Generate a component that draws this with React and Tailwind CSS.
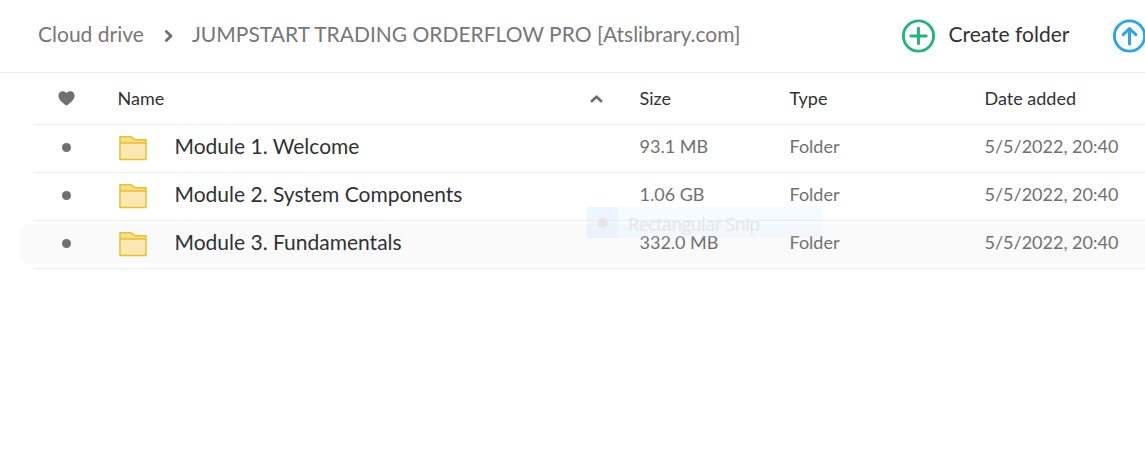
const folders = [
  { name: "Module 1. Welcome", size: "93.1 MB", added: "5/5/2022, 20:40" },
  { name: "Module 2. System Components", size: "1.06 GB", added: "5/5/2022, 20:40" },
  { name: "Module 3. Fundamentals", size: "332.0 MB", added: "5/5/2022, 20:40", hovered: true },
];

function FolderIcon() {
  return (
    <svg className="block h-[26px] w-[30px]" viewBox="0 0 30 26" fill="none">
      <path d="M2 2h11.500l3.500 3h11V8H2z" fill="#f5dd8c" />
      <path d="M2 8h26v16.500H2z" fill="#fbe9b5" />
      <path
        d="M2 1.700h11l4 3h11v19.800H2zM2 8h26"
        stroke="#ebc02a"
        strokeWidth="1.500"
        strokeLinejoin="round"
      />
    </svg>
  );
}

function HeartIcon() {
  return (
    <svg className="block h-[15px] w-[17px]" viewBox="0 0 17 15" fill="#707070">
      <path d="M8.5 14.8C6.6 13.2.4 9.4.4 4.8.4 2.2 2.3.3 4.6.3c1.6 0 3 .6 3.9 1.700C9.400.900 10.800.3 12.400.3c2.300 0 4.200 1.900 4.200 4.500 0 4.600-6.200 8.400-8.100 10z" />
    </svg>
  );
}

function Breadcrumb() {
  return (
    <nav className="flex items-center text-[21px] leading-7 text-[#777]">
      <span className="w-[106px] whitespace-nowrap">Cloud drive</span>
      <svg className="ml-5 mr-[18px] mt-[3px] h-[14px] w-[10px]" viewBox="0 0 10 14" fill="none">
        <path d="M2.300 2.500 7 7 2.300 11.500" stroke="#707070" strokeWidth="2.900" strokeLinecap="round" strokeLinejoin="round" />
      </svg>
      <span className="whitespace-nowrap">JUMPSTART TRADING ORDERFLOW PRO [Atslibrary.com]</span>
    </nav>
  );
}

function Actions() {
  return (
    <div className="flex shrink-0 items-center">
      <svg className="mt-[3px] h-[34px] w-[34px]" viewBox="0 0 34 34" fill="none" stroke="#25b37b" strokeWidth="2.900" strokeLinecap="round">
        <circle cx="16.500" cy="17" r="15.100" />
        <path d="M8.800 17h15.400M16.500 9.300v15.400" />
      </svg>
      <span className="ml-[12.5px] w-[121.5px] whitespace-nowrap text-[21px] leading-7 text-[#303233]">
        Create folder
      </span>
      <svg className="ml-[43px] mt-[3px] h-[34px] w-[34px] shrink-0" viewBox="0 0 34 34" fill="none" stroke="#2ba6de" strokeWidth="2.900" strokeLinecap="round" strokeLinejoin="round">
        <circle cx="16.500" cy="17" r="15.100" />
        <path d="M16.500 25V10.200M10.200 15.600l6.300-6 6.300 6" strokeWidth="3" />
      </svg>
    </div>
  );
}

export default function App() {
  return (
    <div className="relative h-[458px] w-[1145px] overflow-hidden bg-white font-['Lato',sans-serif]">
      <header className="-mr-0.5 flex h-[73px] items-center justify-between border-b border-[#ebebeb] pb-[3.5px] pl-[38px]">
        <Breadcrumb />
        <Actions />
      </header>

      <div className="pl-[35px] text-[18px] text-[#303233]">
        <div className="grid h-[52px] grid-cols-[82.5px_522px_150px_195px_1fr] items-center border-b border-[#ebebeb]">
          <div className="pl-[23px]">
            <HeartIcon />
          </div>
          <div className="flex items-center justify-between pr-[37px]">
            <span>Name</span>
            <svg className="h-[9px] w-[13px]" viewBox="0 0 13 9" fill="none">
              <path d="M2 7l4.500-4.200L11 7" stroke="#707070" strokeWidth="2.900" strokeLinecap="round" strokeLinejoin="round" />
            </svg>
          </div>
          <span>Size</span>
          <span>Type</span>
          <span>Date added</span>
        </div>
      </div>

      <div className="text-[18px] text-[#707070]">
        {folders.map((folder) => (
          <div key={folder.name} className="flex h-12 flex-col">
            <div
              className={`mb-[3px] ml-5 mt-[3px] grid h-10 grid-cols-[98px_56.5px_465px_150px_195px_1fr] items-center rounded-l-lg pb-[3px] ${
                folder.hovered ? "bg-[#fafafa]" : ""
              }`}
            >
              <span className="ml-[42px] mt-px h-[9px] w-[9px] rounded-full bg-[#707070]" />
              <div className="pt-0.5">
                <FolderIcon />
              </div>
              <span className="pb-0.5 text-[21px] leading-7 text-[#303233]">{folder.name}</span>
              <span>{folder.size}</span>
              <span>Folder</span>
              <span>{folder.added}</span>
            </div>
            <div className="ml-[35px] mt-auto h-px bg-[#ebebeb]" />
          </div>
        ))}
      </div>

      {/* fading menu item left over the rows */}
      <div className="absolute left-[587px] top-[207px] flex h-[31px] w-[236px] items-center bg-[#cfe9fa]/20">
        <div className="flex h-full w-[31px] items-center justify-center bg-[#dcebff]/30">
          <span className="h-2.5 w-2.5 rounded-full bg-[#e6e6e6]" />
        </div>
        <span className="ml-[10px] pt-[3px] font-['Open_Sans',sans-serif] text-[18px] tracking-[-0.6px] text-[#e4e6e8]">
          Rectangular Snip
        </span>
      </div>
    </div>
  );
}
